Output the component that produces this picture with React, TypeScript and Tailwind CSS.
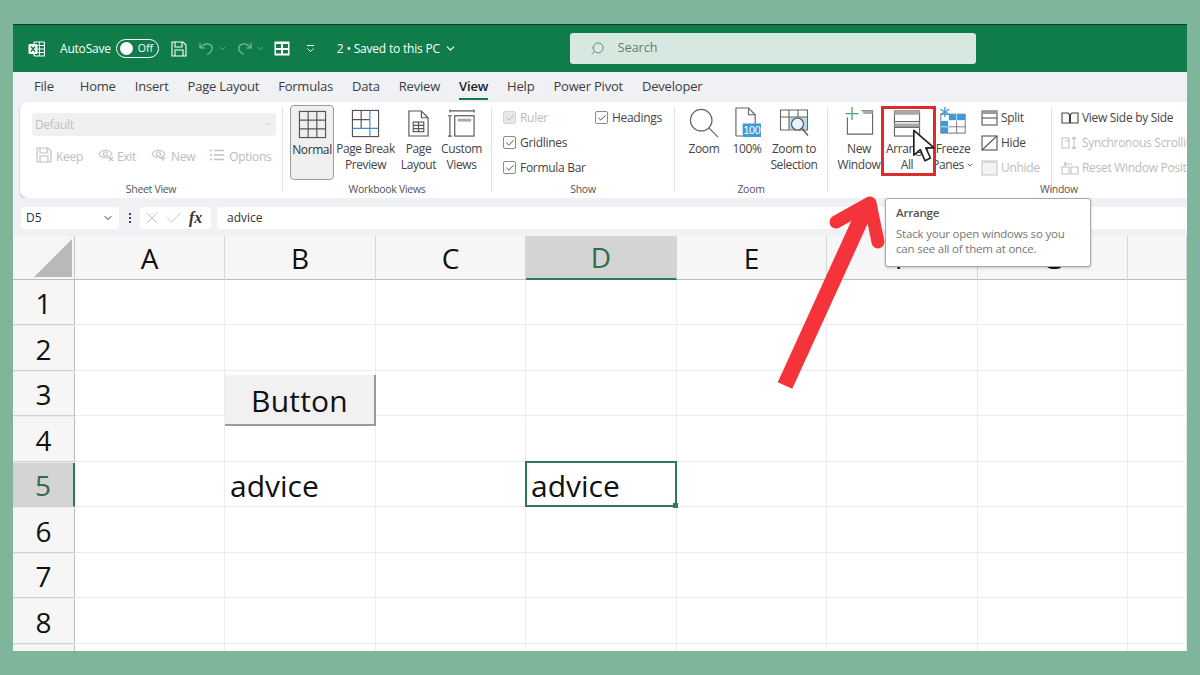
import { Check, ChevronDown, Search, X } from "lucide-react";

const tabs = ["Home", "Insert", "Page Layout", "Formulas", "Data", "Review", "View", "Help", "Power Pivot", "Developer"];
const columns = ["A", "B", "C", "D", "E", "F", "G", ""];
const rows = [1, 2, 3, 4, 5, 6, 7, 8, 9];
const gridCols = "grid grid-cols-[62px_150px_151px_150px_151px_150px_151px_150px_59px]";

const Box = ({ on = true, dim = false }: { on?: boolean; dim?: boolean }) => (
  <span className={`flex h-[13px] w-[13px] items-center justify-center rounded-[2px] border ${dim ? "border-[#d5d5d5] bg-[#e8e8e8] text-[#aaa]" : "border-[#8a8a8a] bg-white text-[#333]"}`}>
    {on && <Check size={10} strokeWidth={2} />}
  </span>
);

const BigBtn = ({ lines, icon, w }: { lines: React.ReactNode[]; icon: React.ReactNode; w: number }) => (
  <div className="flex flex-col items-center" style={{ width: w }}>
    <div className="flex h-[31px] items-end justify-center">{icon}</div>
    <div className="mt-[3px] text-center text-[12px] leading-[16px] tracking-[-0.4px] whitespace-nowrap text-[#444]">
      {lines.map((l, i) => (
        <div key={i}>{l}</div>
      ))}
    </div>
  </div>
);

const Group = ({ label, w, children }: { label: string; w: number; children: React.ReactNode }) => (
  <div className="my-[5px] flex shrink-0 flex-col border-r border-[#e3e3e3]" style={{ width: w, height: 85 }}>
    <div className="flex-1">{children}</div>
    <div className="mb-[-3px] text-center text-[10.5px] leading-[12px] text-[#555]">{label}</div>
  </div>
);

const GridIcon = () => (
  <svg width="29" height="29" viewBox="0 0 30 30" fill="none" stroke="#555" strokeWidth="1.2">
    <rect x="1.500" y="1.500" width="27" height="27" />
    <path d="M10.500 1.500v27M19.500 1.500v27M1.500 10.500h27M1.500 19.500h27" />
  </svg>
);

const BreakIcon = () => (
  <svg width="29" height="29" viewBox="0 0 30 30" fill="none" strokeWidth="1.2">
    <rect x="1.500" y="1.500" width="27" height="27" stroke="#555" />
    <path d="M1.500 11h18M10.500 1.500V20" stroke="#555" />
    <path d="M19.500 1.500v27M1.500 20h27" stroke="#3b8fd0" />
  </svg>
);

const PageIcon = () => (
  <svg width="23" height="29" viewBox="0 0 24 30" fill="none" stroke="#555" strokeWidth="1.2">
    <path d="M2 2h13l7 7v19H2zM15 2v7h7" />
    <rect x="6.500" y="13.500" width="11" height="10" />
    <path d="M6.500 17h11M6.500 20.300h11M12 13.500v10" />
  </svg>
);

const CustomIcon = () => (
  <svg width="29" height="29" viewBox="0 0 30 30" fill="none" stroke="#555" strokeWidth="1.2">
    <path d="M3 2h25M3 .5v3M28 .5v3" />
    <rect x="8" y="7" width="20" height="21" />
    <rect x="11" y="10" width="14" height="3" fill="#aaa" stroke="none" />
    <path d="M3 7v21M1 7h4M1 28h4" />
  </svg>
);

const ZoomIcon = () => (
  <svg width="30" height="30" viewBox="0 0 32 32" fill="none" stroke="#666" strokeWidth="1.3">
    <circle cx="13" cy="13" r="11.500" />
    <path d="M21 21l10 10" />
  </svg>
);

const HundredIcon = () => (
  <svg width="27" height="31" viewBox="0 0 28 32" fill="none">
    <path d="M2 30V1h13l7 7v11M15 1v7h7M2 30h7" stroke="#666" strokeWidth="1.2" />
    <rect x="9" y="17" width="19" height="14" fill="#3f9bd8" />
    <text x="18.500" y="28" fontSize="11" fill="#fff" textAnchor="middle" fontFamily="Liberation Sans">100</text>
  </svg>
);

const ZoomSelIcon = () => (
  <svg width="30" height="30" viewBox="0 0 30 30" fill="none">
    <rect x="10" y="9" width="18" height="12" fill="#bcdcf2" />
    <path d="M1.500 2h27v20h-27zM1.500 9h27M10 2v20M19 2v7" stroke="#666" strokeWidth="1.100" />
    <circle cx="18.500" cy="16" r="6" fill="#e8f3fb" stroke="#555" strokeWidth="1.2" />
    <path d="M23 20.500l6 7" stroke="#555" strokeWidth="1.300" />
  </svg>
);

const NewWindowIcon = () => (
  <svg className="mb-[3px]" width="31" height="28" viewBox="0 0 32 30" fill="none">
    <path d="M3 11v18h27V4H18" stroke="#666" strokeWidth="1.2" />
    <rect x="20" y="4" width="10" height="3.500" fill="#aaa" />
    <path d="M8 0v14M1 7h14" stroke="#4aa56f" strokeWidth="1.400" />
  </svg>
);

const ArrangeIcon = () => (
  <svg className="mb-[1px]" width="28" height="27" viewBox="0 0 28 28" fill="none" stroke="#666" strokeWidth="1.2">
    <rect x="1" y="1" width="26" height="26" />
    <rect x="1" y="1" width="26" height="4" fill="#aaa" stroke="none" />
    <path d="M1 12h26" />
    <rect x="1" y="14" width="26" height="4" fill="#aaa" stroke="none" />
    <path d="M1 18h26" />
  </svg>
);

const FreezeIcon = () => (
  <svg className="mb-[4px]" width="30" height="27" viewBox="0 0 30 30" fill="none">
    <rect x="1.500" y="8" width="27" height="21" fill="#fff" stroke="#666" strokeWidth="1" />
    <rect x="10" y="8" width="18.500" height="7" fill="#3f9bd8" />
    <rect x="1.500" y="15" width="8.500" height="14" fill="#3f9bd8" />
    <path d="M10 8v21M19 8v21M1.500 15h27M1.500 22h27" stroke="#fff" strokeWidth="0.8" />
    <path d="M19 15v14M10 22h19" stroke="#666" strokeWidth="0.9" />
    <path d="M6 0v11M1 2.500l10 6M1 8.500l10-6" stroke="#3f9bd8" strokeWidth="1.500" />
  </svg>
);

const MiniWin = ({ hide = false, dim = false }: { hide?: boolean; dim?: boolean }) => (
  <svg width="17" height="16" viewBox="0 0 17 16" fill="none" stroke={dim ? "#c8c8c8" : "#555"} strokeWidth="1.100">
    <rect x="1" y="1" width="15" height="14" fill={dim ? "#f3f3f3" : "none"} />
    {hide ? <path d="M1 15L16 1" /> : !dim && <path d="M1 8h15" />}
    {!hide && <rect x="1" y="1" width="15" height={dim ? 2 : 3} fill={dim ? "#d5d5d5" : "#999"} stroke="none" />}
  </svg>
);

const SideIcon = ({ dim = false, kind }: { dim?: boolean; kind: "side" | "sync" | "reset" }) => {
  const c = dim ? "#c2c2c2" : "#444";
  return (
    <svg width="18" height="14" viewBox="0 0 18 14" fill="none" stroke={c} strokeWidth="1.100">
      {kind === "side" && <path d="M1 2h6l1.500 1.500V12H1zM17 2h-6L9.500 3.500V12H17z" />}
      {kind === "sync" && <path d="M1 2h7v10H1zM4 5h4v7M13 1v12M11 3l2-2 2 2M11 11l2 2 2-2" />}
      {kind === "reset" && <path d="M1 6h7v7H1zM10 6h7v7h-7zM3 3h8M3 3l2-2M3 3l2 2" />}
    </svg>
  );
};

const Faded = ({ children }: { children: React.ReactNode }) => <span className="text-[12px] tracking-[-0.3px] text-[#bcbcbc]">{children}</span>;

export default function App() {
  return (
    <div className="h-[675px] w-[1200px] overflow-hidden bg-[#7fb59a] px-[13px] pt-[24px] font-['Open_Sans','Noto_Sans',sans-serif]">
      <div className="relative flex h-[627px] w-[1174px] flex-col overflow-hidden bg-white">
        {/* title bar */}
        <div className="flex h-[48px] shrink-0 items-center border-t border-[#123a28] bg-[#107c4a] text-white">
          <svg className="ml-[15px]" width="17" height="16" viewBox="0 0 17 16">
            <rect x="6" y="1" width="10.500" height="14" rx="1" fill="none" stroke="#fff" strokeWidth="1.2" />
            <path d="M7 4.500h9M7 8h9M7 11.500h9M11.500 1v14" stroke="#fff" strokeWidth="1" />
            <rect x="0.500" y="3" width="9" height="10" rx="1" fill="#fff" />
            <path d="M3 5.500l4 5M7 5.500l-4 5" stroke="#107c4a" strokeWidth="1.300" />
          </svg>
          <span className="ml-[15px] text-[12px] tracking-[-0.2px]">AutoSave</span>
          <div className="ml-[5px] flex h-[19px] w-[43px] items-center rounded-full border border-white pl-[3px]">
            <span className="h-[13px] w-[13px] rounded-full bg-white" />
            <span className="ml-[5px] text-[10.5px]">Off</span>
          </div>
          <svg className="ml-[12px]" width="16" height="16" viewBox="0 0 16 16" fill="none" stroke="#fff" strokeWidth="1.100">
            <path d="M1 1h11l3 3v11H1zM4 1v5h7V1M4 15v-6h8v6" />
          </svg>
          <svg className="ml-[12px]" width="15" height="15" viewBox="0 0 15 15" fill="none" stroke="#7fbb9f" strokeWidth="1.200">
            <path d="M1 2v5h5M1.500 7C4 3 8 2 11 3.500c3.500 2 3 7-3 10" />
          </svg>
          <ChevronDown className="ml-[4px] text-[#7fbb9f]" size={9} />
          <svg className="ml-[10px]" width="15" height="15" viewBox="0 0 15 15" fill="none" stroke="#7fbb9f" strokeWidth="1.200">
            <path d="M14 2v5H9M13.500 7C11 3 7 2 4 3.500c-3.500 2-3 7 3 10" />
          </svg>
          <ChevronDown className="ml-[4px] text-[#7fbb9f]" size={9} />
          <svg className="ml-[9px]" width="16" height="15" viewBox="0 0 16 15">
            <rect x="0.500" y="0.500" width="15" height="14" fill="#fff" />
            <rect x="2" y="3" width="5" height="4" fill="#107c4a" />
            <rect x="9" y="3" width="5" height="4" fill="#107c4a" />
            <rect x="2" y="9" width="5" height="3.500" fill="#107c4a" />
            <rect x="9" y="9" width="5" height="3.500" fill="#107c4a" />
          </svg>
          <svg className="ml-[16px]" width="9" height="9" viewBox="0 0 9 9" fill="none" stroke="#fff" strokeWidth="1">
            <path d="M1 1.500h7M1.500 4.500L4.500 7.500 7.500 4.500" />
          </svg>
          <span className="ml-[22px] text-[12px] tracking-[-0.2px]">2 • Saved to this PC</span>
          <ChevronDown className="ml-[4px]" size={13} />
          <div className="ml-[113px] flex h-[31px] w-[406px] items-center rounded-[3px] bg-[#d6e8df] pl-[20px] text-[#5c7e6e]">
            <Search size={15} className="-scale-x-100" strokeWidth={1.400} />
            <span className="ml-[13px] text-[12.5px]">Search</span>
          </div>
        </div>

        {/* tabs */}
        <div className="flex h-[30px] shrink-0 items-center gap-[19px] bg-[#f0f1f5] pl-[21px] text-[13px] tracking-[-0.2px] text-[#3c3c3c]">
          <span className="mr-[7px]">File</span>
          {tabs.map((t) =>
            t === "View" ? (
              <span key={t} className="relative font-semibold text-[#222]">
                {t}
                <span className="absolute right-0 bottom-[-3px] left-0 h-[2px] bg-[#107c4a]" />
              </span>
            ) : (
              <span key={t}>{t}</span>
            ),
          )}
        </div>

        {/* ribbon */}
        <div className="shrink-0 bg-[#f0f1f5] pl-[7px]">
          <div className="flex h-[96px] rounded-l-[8px] bg-white tracking-[-0.3px] shadow-[0_1px_2px_rgba(0,0,0,0.25)]">
            <Group label="Sheet View" w={263}>
              <div className="mt-[6px] ml-[12px] flex h-[23px] w-[244px] items-center justify-between rounded-[4px] bg-[#f0f0f0] px-[3px] text-[12px] text-[#c0c0c0]">
                Default <ChevronDown size={9} />
              </div>
              <div className="mt-[7px] ml-[16px] flex items-center">
                <svg width="16" height="16" viewBox="0 0 16 16" fill="none" stroke="#c2c2c2" strokeWidth="1.200">
                  <path d="M1 1h11l3 3v11H1zM4 1v5h7V1M4 15v-6h8v6" />
                </svg>
                <span className="ml-[4px]"><Faded>Keep</Faded></span>
                <svg className="ml-[15px]" width="16" height="14" viewBox="0 0 16 14" fill="none" stroke="#c2c2c2" strokeWidth="1.100">
                  <path d="M1 6c3-5 10-5 13 0-3 5-10 5-13 0z" />
                  <circle cx="7.500" cy="6" r="2" />
                  <path d="M11 9l4 4M15 9l-4 4" />
                </svg>
                <span className="ml-[3px]"><Faded>Exit</Faded></span>
                <svg className="ml-[15px]" width="16" height="14" viewBox="0 0 16 14" fill="none" stroke="#c2c2c2" strokeWidth="1.100">
                  <path d="M1 6c3-5 10-5 13 0-3 5-10 5-13 0z" />
                  <circle cx="7.500" cy="6" r="2" />
                  <path d="M12 8v5M9.500 10.500h5" />
                </svg>
                <span className="ml-[4px]"><Faded>New</Faded></span>
                <svg className="ml-[14px]" width="15" height="12" viewBox="0 0 15 12" fill="none" stroke="#c2c2c2" strokeWidth="1.300">
                  <path d="M1 1.500h2M1 6h2M1 10.500h2M5 1.500h10M5 6h10M5 10.500h10" />
                </svg>
                <span className="ml-[5px]"><Faded>Options</Faded></span>
              </div>
            </Group>

            <Group label="Workbook Views" w={209}>
              <div className="flex pl-[7px]">
                <div className="mt-[-2px] flex h-[75px] w-[44px] flex-col items-center rounded-[4px] border border-[#9d9d9d] bg-[#efefef] pt-[4px]">
                  <GridIcon />
                  <span className="mt-[1px] text-[12px] leading-[20px] tracking-[-0.4px] text-[#333]">Normal</span>
                </div>
                <div className="flex">
                  <BigBtn lines={["Page Break", "Preview"]} icon={<BreakIcon />} w={63} />
                  <BigBtn lines={["Page", "Layout"]} icon={<PageIcon />} w={43} />
                  <BigBtn lines={["Custom", "Views"]} icon={<CustomIcon />} w={43} />
                </div>
              </div>
            </Group>

            <Group label="Show" w={183}>
              <div className="flex flex-col gap-[8px] pt-[2px] pl-[11px] text-[12px] text-[#444]">
                <div className="flex h-[17px] items-center gap-[4px]">
                  <Box dim />
                  <span className="w-[71px] text-[#bcbcbc]">Ruler</span>
                  <Box />
                  <span>Headings</span>
                </div>
                <div className="flex h-[17px] items-center gap-[4px]">
                  <Box />
                  <span>Gridlines</span>
                </div>
                <div className="flex h-[17px] items-center gap-[4px]">
                  <Box />
                  <span>Formula Bar</span>
                </div>
              </div>
            </Group>

            <Group label="Zoom" w={153}>
              <div className="flex pl-[8px]">
                <BigBtn lines={["Zoom"]} icon={<ZoomIcon />} w={42} />
                <BigBtn lines={["100%"]} icon={<HundredIcon />} w={44} />
                <BigBtn lines={["Zoom to", "Selection"]} icon={<ZoomSelIcon />} w={50} />
              </div>
            </Group>

            <Group label="" w={224}>
              <div className="flex pl-[9px]">
                <BigBtn lines={["New", "Window"]} icon={<NewWindowIcon />} w={44} />
                <BigBtn lines={["Arrange", "All"]} icon={<ArrangeIcon />} w={52} />
                <BigBtn
                  lines={[
                    "Freeze",
                    <span key="p" className="inline-flex items-center gap-[2px]">Panes <ChevronDown size={8} strokeWidth={2.500} /></span>,
                  ]}
                  icon={<FreezeIcon />}
                  w={40}
                />
                <div className="ml-[8px] flex flex-col gap-[8px] pt-[2px] text-[12px] text-[#444]">
                  <div className="flex h-[17px] items-center gap-[3px]"><MiniWin />Split</div>
                  <div className="flex h-[17px] items-center gap-[3px]"><MiniWin hide />Hide</div>
                  <div className="flex h-[17px] items-center gap-[3px] text-[#bcbcbc]"><MiniWin dim />Unhide</div>
                </div>
              </div>
            </Group>

            <div className="mt-[5px] flex h-[85px] flex-col gap-[8px] pt-[2px] pl-[9px] text-[12px] whitespace-nowrap text-[#444]">
              <div className="flex h-[17px] items-center gap-[3px]"><SideIcon kind="side" />View Side by Side</div>
              <div className="flex h-[17px] items-center gap-[3px] text-[#bcbcbc]"><SideIcon dim kind="sync" />Synchronous Scrolling</div>
              <div className="flex h-[17px] items-center gap-[3px] text-[#bcbcbc]"><SideIcon dim kind="reset" />Reset Window Position</div>
            </div>
          </div>
        </div>

        {/* formula bar */}
        <div className="flex h-[38px] shrink-0 items-start gap-[6px] bg-[#f0f1f5] pt-[9px] pl-[8px] text-[12px] text-[#333]">
          <div className="flex h-[22px] w-[98px] items-center justify-between rounded-[3px] bg-white px-[5px]">
            D5 <ChevronDown size={12} />
          </div>
          <div className="flex h-[22px] w-[9px] flex-col items-center justify-center gap-[2px]">
            <span className="h-[2px] w-[2px] bg-[#444]" />
            <span className="h-[2px] w-[2px] bg-[#444]" />
            <span className="h-[2px] w-[2px] bg-[#444]" />
          </div>
          <div className="flex h-[22px] w-[71px] items-center rounded-[3px] bg-white pl-[2px]">
            <X size={20} strokeWidth={1} className="text-[#bbb]" />
            <Check size={20} strokeWidth={1} className="ml-[2px] text-[#bbb]" />
            <span className="ml-[5px] font-['Liberation_Serif',serif] text-[16px] font-bold text-[#333] italic">fx</span>
          </div>
          <div className="flex h-[22px] flex-1 items-center rounded-l-[3px] bg-white pl-[10px]">advice</div>
        </div>

        {/* column headers */}
        <div className={`${gridCols} h-[44px] shrink-0 border-b border-[#bdbdbd] bg-[#f6f6f6] text-[28px] text-[#111]`}>
          <div className="flex items-end justify-end border-r border-[#c5c5c5] pr-[2px] pb-[3px]">
            <div className="h-[38px] w-[38px] bg-[#b9b9b9] [clip-path:polygon(100%_0,100%_100%,0_100%)]" />
          </div>
          {columns.map((c, i) => (
            <div
              key={i}
              className={`flex items-center justify-center border-r border-[#d5d5d5] ${c === "D" ? "border-b-2 border-b-[#2b7a54] bg-[#d4d4d4] text-[#2f6b4f]" : ""}`}
            >
              {c}
            </div>
          ))}
        </div>

        {/* sheet */}
        <div className="flex-1 overflow-hidden text-[#111]">
          {rows.map((r) => (
            <div key={r} className={`${gridCols} h-[45.5px]`}>
              <div
                className={`flex items-center justify-center border-b border-[#d0d0d0] pt-[2px] text-[28px] ${r === 5 ? "border-r-2 border-r-[#2b7a54] bg-[#d4d4d4] text-[#2f6b4f]" : "border-r border-r-[#bdbdbd] bg-[#f6f6f6]"}`}
              >
                {r < 9 ? r : ""}
              </div>
              {columns.concat("").map((c, i) => (
                <div key={i} className="relative border-r border-b border-[#ececec]">
                  {r === 3 && i === 1 && (
                    <div className="absolute top-[4px] left-0 z-10 flex h-[51px] w-[151px] items-center justify-center border-r-2 border-b-2 border-[#9a9a9a] bg-[#f1f1f1] pt-[1px] text-[30px] tracking-[0.2px] text-[#111]">
                      Button
                    </div>
                  )}
                  {r === 5 && i === 1 && <span className="absolute top-[1px] left-[5px] text-[30px]">advice</span>}
                  {r === 5 && i === 3 && (
                    <div className="absolute -top-px -right-px -bottom-px -left-px z-10 border-2 border-[#2b7a54]">
                      <span className="absolute top-0 left-[4px] text-[30px]">advice</span>
                      <span className="absolute -right-[3px] -bottom-[3px] h-[5px] w-[5px] bg-[#2b7a54]" />
                    </div>
                  )}
                </div>
              ))}
            </div>
          ))}
        </div>

        {/* window group label spans the last two ribbon parts */}
        <div className="absolute top-[158px] left-[1027px] text-[10.5px] tracking-[-0.3px] text-[#555]">Window</div>

        {/* tooltip */}
        <div className="absolute top-[174px] left-[872px] z-20 h-[69px] w-[206px] rounded-[3px] border border-[#a8a8a8] bg-white px-[10px] pt-[6px] text-[11.5px] leading-[15.5px] tracking-[-0.2px] text-[#777] shadow-[0_1px_3px_rgba(0,0,0,0.2)]">
          <div className="mb-[5px] font-semibold text-[#555]">Arrange</div>
          <div>Stack your open windows so you</div>
          <div>can see all of them at once.</div>
        </div>

        {/* red highlight */}
        <div className="absolute top-[82px] left-[868px] z-20 h-[70px] w-[55px] border-[3.5px] border-[#dd2c30]" />

        {/* mouse pointer */}
        <svg className="absolute top-[104px] left-[899px] z-30" width="24" height="36" viewBox="0 0 26 38">
          <path d="M2 2v27l7-6 5 12 6-3-5-11h9z" fill="#fff" stroke="#222" strokeWidth="1.800" strokeLinejoin="round" />
        </svg>

        {/* red arrow */}
        <svg className="absolute top-[160px] left-[750px] z-20" width="140" height="220" viewBox="0 0 140 220" fill="none" stroke="#f4343a" strokeLinejoin="round" strokeLinecap="round">
          <path d="M22 201.500L103 24" strokeWidth="16" strokeLinecap="butt" />
          <path d="M73 38L107 19 115 58" strokeWidth="13" />
        </svg>
      </div>
    </div>
  );
}
